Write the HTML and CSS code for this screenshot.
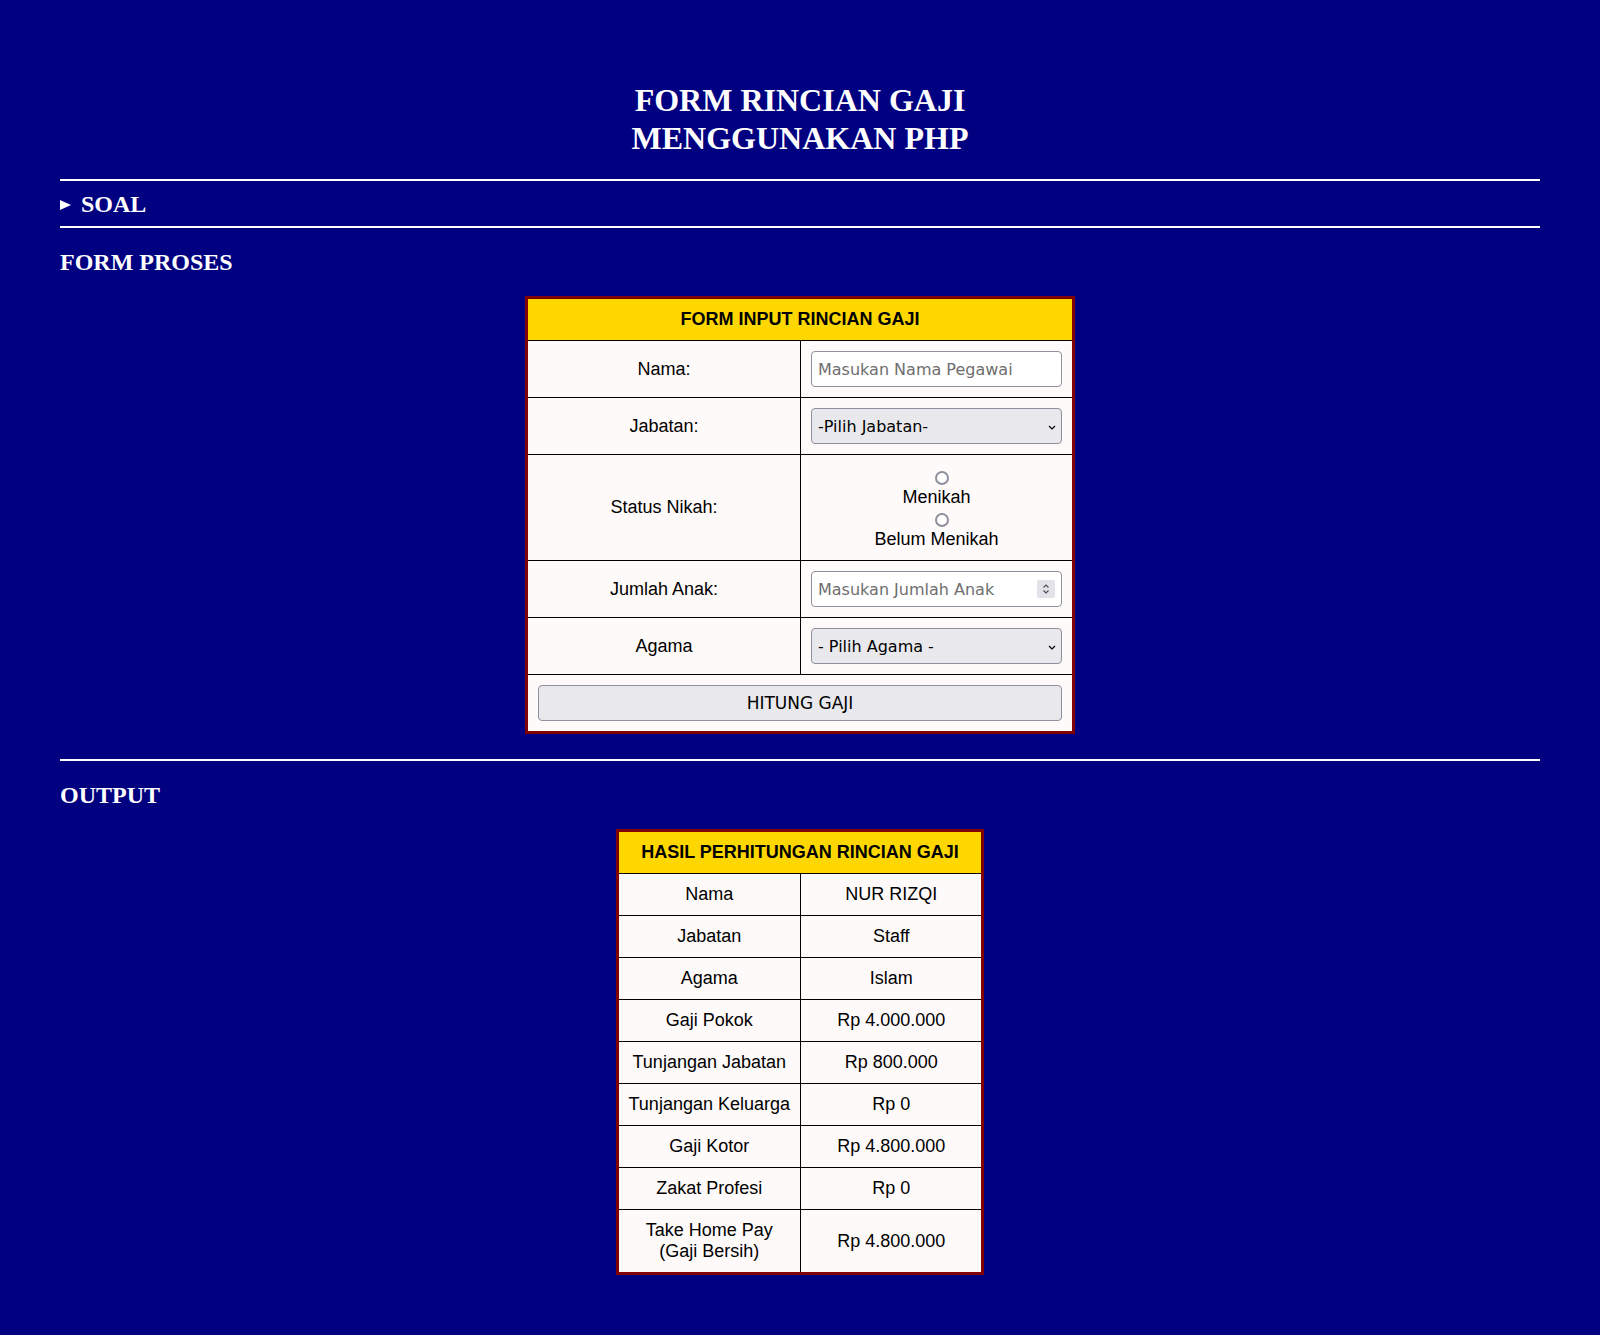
FILE: index.html
```html
<!DOCTYPE html>
<html lang="id">
<head>
<meta charset="utf-8">
<title>Form Rincian Gaji</title>
<link rel="stylesheet" href="styles.css">
</head>
<body>
<div class="page">
  <h1 class="title">FORM RINCIAN GAJI<br>MENGGUNAKAN PHP</h1>
  <hr class="rule rule-top">
  <details class="soal">
    <summary><span class="marker"></span>SOAL</summary>
  </details>
  <hr class="rule rule-mid">
  <h2 class="section">FORM PROSES</h2>
  <form class="form-wrap" onsubmit="return false;">
    <table class="tbl form-tbl">
      <tr><th colspan="2">FORM INPUT RINCIAN GAJI</th></tr>
      <tr>
        <td class="lbl">Nama:</td>
        <td><input type="text" class="field" placeholder="Masukan Nama Pegawai"></td>
      </tr>
      <tr>
        <td class="lbl">Jabatan:</td>
        <td>
          <span class="sel-wrap">
            <select class="field sel">
              <option>-Pilih Jabatan-</option>
              <option>Manager</option>
              <option>Asisten</option>
              <option>Kabag</option>
              <option>Staff</option>
            </select>
            <svg class="chev" width="8" height="5" viewBox="0 0 8 5"><path d="M1 1 L4 4 L7 1" fill="none" stroke="#000" stroke-width="1.2"/></svg>
          </span>
        </td>
      </tr>
      <tr>
        <td class="lbl">Status Nikah:</td>
        <td class="radios">
          <input type="radio" name="status" class="radio" id="st1"><br>
          <label for="st1">Menikah</label><br>
          <input type="radio" name="status" class="radio" id="st2"><br>
          <label for="st2">Belum Menikah</label>
        </td>
      </tr>
      <tr>
        <td class="lbl">Jumlah Anak:</td>
        <td>
          <span class="sel-wrap">
            <input type="number" class="field num" placeholder="Masukan Jumlah Anak">
            <svg class="spin" width="18" height="18" viewBox="0 0 18 18"><rect x="0" y="0" width="18" height="18" rx="2" fill="#e2e2e8"/><path d="M6.5 7.5 L9 5 L11.5 7.5" fill="none" stroke="#4a4a55" stroke-width="1.1"/><path d="M6.5 10.5 L9 13 L11.5 10.5" fill="none" stroke="#4a4a55" stroke-width="1.1"/></svg>
          </span>
        </td>
      </tr>
      <tr>
        <td class="lbl">Agama</td>
        <td>
          <span class="sel-wrap">
            <select class="field sel">
              <option>- Pilih Agama -</option>
              <option>Islam</option>
              <option>Kristen</option>
              <option>Katolik</option>
              <option>Hindu</option>
              <option>Budha</option>
            </select>
            <svg class="chev" width="8" height="5" viewBox="0 0 8 5"><path d="M1 1 L4 4 L7 1" fill="none" stroke="#000" stroke-width="1.2"/></svg>
          </span>
        </td>
      </tr>
      <tr>
        <td colspan="2" class="btn-cell"><button type="submit" class="btn">HITUNG GAJI</button></td>
      </tr>
    </table>
  </form>
  <hr class="rule rule-out">
  <h2 class="section section-out">OUTPUT</h2>
  <table class="tbl hasil-tbl">
    <tr><th colspan="2">HASIL PERHITUNGAN RINCIAN GAJI</th></tr>
    <tr><td>Nama</td><td>NUR RIZQI</td></tr>
    <tr><td>Jabatan</td><td>Staff</td></tr>
    <tr><td>Agama</td><td>Islam</td></tr>
    <tr><td>Gaji Pokok</td><td>Rp 4.000.000</td></tr>
    <tr><td>Tunjangan Jabatan</td><td>Rp 800.000</td></tr>
    <tr><td>Tunjangan Keluarga</td><td>Rp 0</td></tr>
    <tr><td>Gaji Kotor</td><td>Rp 4.800.000</td></tr>
    <tr><td>Zakat Profesi</td><td>Rp 0</td></tr>
    <tr><td>Take Home Pay<br>(Gaji Bersih)</td><td>Rp 4.800.000</td></tr>
  </table>
</div>
</body>
</html>
```

FILE: styles.css
```css
* {
  box-sizing: border-box;
}

body {
  margin: 0;
  background: #000080;
  color: #ffffff;
  font-family: "Liberation Serif", "Times New Roman", serif;
}

.page {
  padding: 81px 60px 60px;
}

.title {
  margin: 0;
  font-size: 32px;
  line-height: 38px;
  font-weight: bold;
  text-align: center;
}

.rule {
  border: 0;
  height: 2px;
  background: #ffffff;
  margin: 0;
}

.rule-top {
  margin-top: 22px;
}

.rule-mid {
  margin-top: 8px;
}

.rule-out {
  margin-top: 25px;
}

.soal {
  margin-top: 9px;
}

.soal summary {
  list-style: none;
  font-size: 24px;
  line-height: 28px;
  font-weight: bold;
  cursor: pointer;
}

.soal summary::-webkit-details-marker {
  display: none;
}

.marker {
  display: inline-block;
  width: 0;
  height: 0;
  border-left: 11px solid #ffffff;
  border-top: 5.5px solid transparent;
  border-bottom: 5.5px solid transparent;
  margin-right: 10px;
  vertical-align: 2px;
}

.section {
  margin: 20px 0 0;
  font-size: 24px;
  line-height: 28px;
  font-weight: bold;
}

.section-out {
  margin-top: 20px;
}

.form-wrap {
  margin: 0;
}

.tbl {
  border-collapse: separate;
  border-spacing: 0;
  border: 3px solid #800000;
  margin: 20px auto 0;
  background: #fffafa;
  color: #000000;
  font-family: "Liberation Sans", Arial, sans-serif;
  font-size: 18px;
}

.tbl th {
  background: #ffd700;
  font-weight: bold;
  padding: 10px;
  text-align: center;
}

.tbl td {
  padding: 10px;
  text-align: center;
  vertical-align: middle;
  border-top: 1px solid #000000;
  width: 50%;
}

.tbl td + td {
  border-left: 1px solid #000000;
}

.form-tbl {
  width: 550px;
}

.field {
  display: block;
  width: 100%;
  height: 36px;
  margin: 0;
  padding: 0 6px;
  border: 1px solid #8f8f9d;
  border-radius: 4px;
  background: #ffffff;
  color: #000000;
  font-family: "DejaVu Sans", Verdana, sans-serif;
  font-size: 16px;
  text-align: left;
  outline: none;
}

.field::placeholder {
  color: #6e6e6e;
  opacity: 1;
}

.sel-wrap {
  position: relative;
  display: block;
}

.sel {
  -webkit-appearance: none;
  appearance: none;
  background: #e9e9ed;
}

.chev {
  position: absolute;
  right: 6px;
  top: 17px;
  pointer-events: none;
}

.num {
  -moz-appearance: textfield;
  appearance: textfield;
}

.num::-webkit-outer-spin-button,
.num::-webkit-inner-spin-button {
  -webkit-appearance: none;
  margin: 0;
}

.spin {
  position: absolute;
  right: 7px;
  top: 9px;
  pointer-events: none;
}

.tbl td.radios {
  padding: 11px 10px 10px;
  line-height: normal;
}

.radio {
  -webkit-appearance: none;
  appearance: none;
  width: 14px;
  height: 14px;
  margin: 0 0 0 10px;
  border: 2px solid #8f8f9d;
  border-radius: 50%;
  background: #ffffff;
  vertical-align: -3px;
}

.btn-cell {
  padding: 10px;
}

.btn {
  display: block;
  width: 100%;
  height: 36px;
  margin: 0;
  border: 1px solid #8f8f9d;
  border-radius: 4px;
  background: #e9e9ed;
  color: #000000;
  font-family: "DejaVu Sans", Verdana, sans-serif;
  font-size: 17px;
  cursor: pointer;
}
```
